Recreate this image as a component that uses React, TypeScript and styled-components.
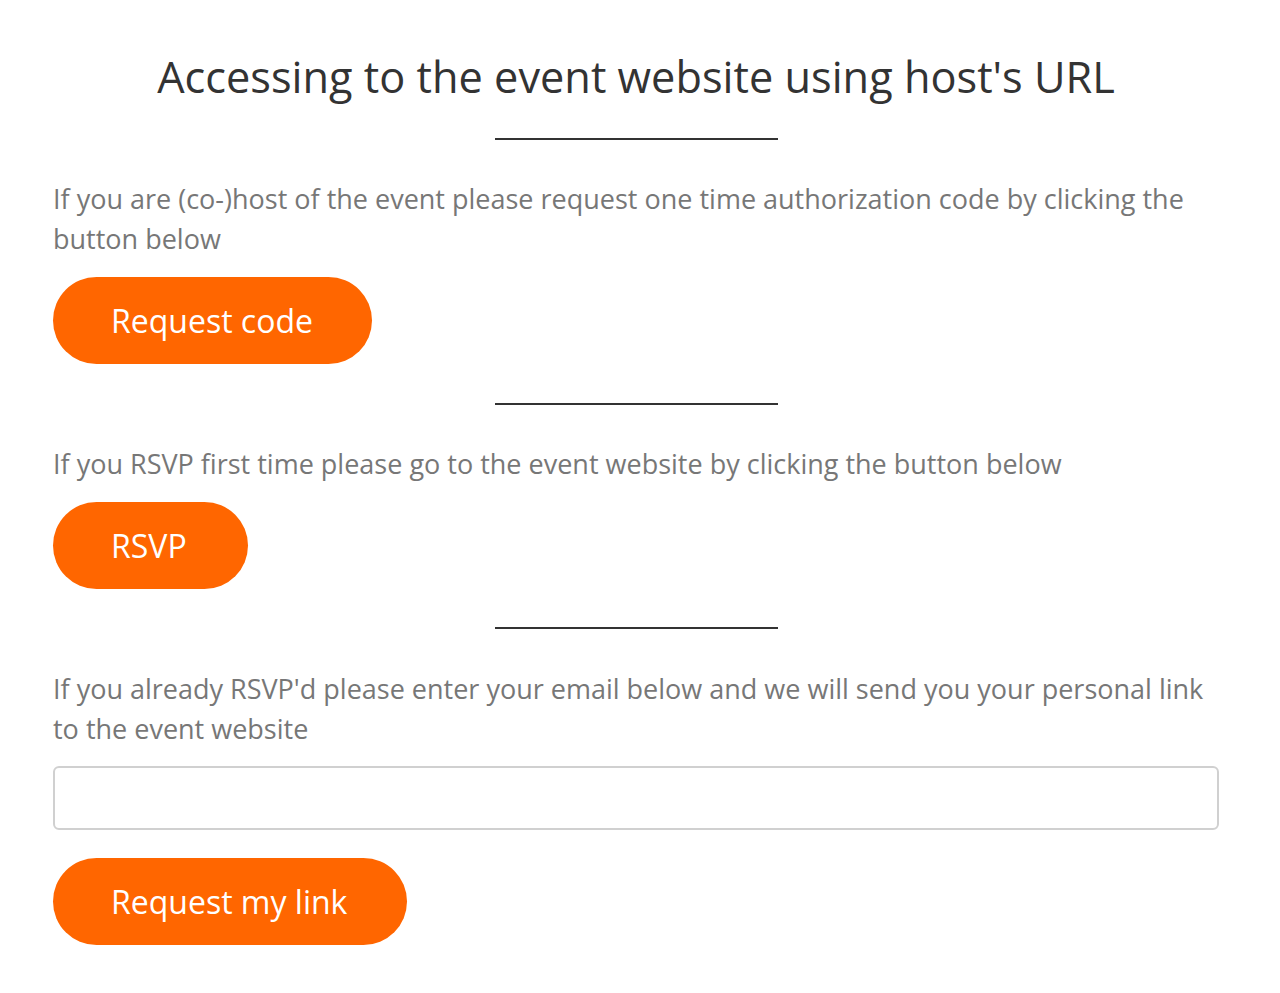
import styled, { createGlobalStyle } from "styled-components";

const GlobalStyle = createGlobalStyle`
    body {
        margin: 0;
        background: #fff;
        font-family: "Open Sans", "Noto Sans", sans-serif;
    }
`

const Page = styled.div`
    display: flex;
    flex-direction: column;
    padding: 46px 61px 40px 53px;
`

const Title = styled.h1`
    margin: 0;
    text-align: center;
    color: #333;
    font-size: 43.3px;
    font-weight: 400;
    line-height: 62px;
`

const Divider = styled.hr<{ $top: number; $bottom: number }>`
    width: 283px;
    margin: ${p => p.$top}px auto ${p => p.$bottom}px;
    border: none;
    border-top: 2px solid #333;
`

const Text = styled.p`
    margin: 0;
    color: #777;
    font-size: 27px;
    line-height: 40px;
    margin-top: -1px;
    margin-bottom: 1px;
`

const Button = styled.button<{ $width: number; $gap?: number }>`
    width: ${p => p.$width}px;
    height: 87px;
    margin-top: ${p => p.$gap ?? 17}px;
    padding: 0 0 0 58px;
    border: none;
    border-radius: 44px;
    background: #ff6600;
    color: #fff;
    font-family: inherit;
    font-size: 32px;
    text-align: left;
    cursor: pointer;
`

const EmailInput = styled.input`
    height: 64px;
    margin-top: 16px;
    box-sizing: border-box;
    border: 2px solid #d0d0d0;
    border-radius: 6px;
    font-size: 22px;
    padding: 0 16px;
`

export default function App() {
    return (
        <>
            <GlobalStyle />
            <Page>
                <Title>Accessing to the event website using host's URL</Title>
                <Divider $top={30} $bottom={40} />
                <Text>
                    If you are (co-)host of the event please request one time authorization code by clicking the
                    button below
                </Text>
                <Button $width={319}>Request code</Button>
                <Divider $top={39} $bottom={40} />
                <Text>If you RSVP first time please go to the event website by clicking the button below</Text>
                <Button $width={195}>RSVP</Button>
                <Divider $top={38} $bottom={41} />
                <Text>
                    If you already RSVP'd please enter your email below and we will send you your personal link
                    to the event website
                </Text>
                <EmailInput type="email" />
                <Button $width={354} $gap={28}>Request my link</Button>
            </Page>
        </>
    )
}
